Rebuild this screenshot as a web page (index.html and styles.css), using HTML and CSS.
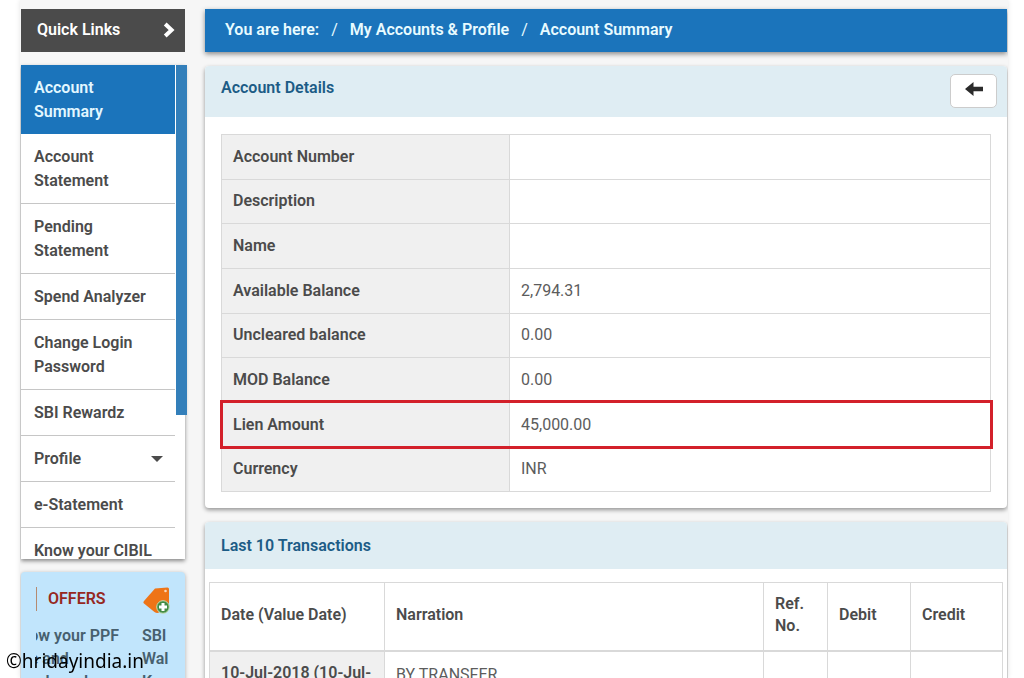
FILE: index.html
```html
<!DOCTYPE html>
<html lang="en">
<head>
<meta charset="utf-8">
<title>Account Summary</title>
<link rel="stylesheet" href="styles.css">
</head>
<body>
<div class="page">
  <aside class="sidebar">
    <h2 class="quick-links">Quick Links
      <svg class="chevron" viewBox="0 0 12 16" aria-hidden="true"><path d="M2.2 2 L8.6 8 L2.2 14" /></svg>
    </h2>
    <nav class="menu">
      <ul class="menu-list">
        <li><a class="active" href="#">Account Summary</a></li>
        <li><a href="#">Account Statement</a></li>
        <li><a href="#">Pending Statement</a></li>
        <li><a href="#">Spend Analyzer</a></li>
        <li><a href="#">Change Login Password</a></li>
        <li><a href="#">SBI Rewardz</a></li>
        <li><a class="expandable" href="#">Profile</a></li>
        <li><a href="#">e-Statement</a></li>
        <li><a href="#">Know your CIBIL</a></li>
      </ul>
      <div class="scroll-thumb"></div>
    </nav>
    <section class="offers">
      <div class="offers-head">
        <h2>OFFERS</h2>
        <svg class="tag" viewBox="0 0 27 27" aria-hidden="true">
          <path class="tag-body" d="M12 1.500 L24.500 .5 Q26 .5 26 2 L26 17 L16 25.500 Q14 26.500 11.500 25 L1 16.500 Q-.2 15.500 1 14 Z"/>
          <circle class="tag-hole" cx="22.500" cy="4" r="1.300"/>
          <circle class="tag-badge" cx="20" cy="20" r="6.300"/>
          <path class="tag-plus" d="M20 16 V24 M16 20 H24"/>
        </svg>
      </div>
      <div class="ticker">
        <p class="ticker-first">Know your PPF<br>rate and<br>withdrawal</p>
        <p>SBI<br>Wal<br>Kno</p>
      </div>
    </section>
  </aside>

  <main class="content">
    <nav class="breadcrumb">
      <span>You are here:</span><i>/</i><a href="#">My Accounts &amp; Profile</a><i>/</i><a href="#">Account Summary</a>
    </nav>

    <section class="panel">
      <header class="panel-head">
        <h1>Account Details</h1>
        <button class="back" type="button" aria-label="Back">
          <svg viewBox="0 0 18 14" aria-hidden="true"><path d="M0 7 L8.500 0 V4.700 H18 V9.300 H8.500 V14 Z"/></svg>
        </button>
      </header>
      <div class="panel-body">
        <table class="details">
          <tr><th scope="row">Account Number</th><td></td></tr>
          <tr><th scope="row">Description</th><td></td></tr>
          <tr><th scope="row">Name</th><td></td></tr>
          <tr><th scope="row">Available Balance</th><td>2,794.31</td></tr>
          <tr><th scope="row">Uncleared balance</th><td>0.00</td></tr>
          <tr><th scope="row">MOD Balance</th><td>0.00</td></tr>
          <tr class="highlight"><th scope="row">Lien Amount</th><td>45,000.00</td></tr>
          <tr><th scope="row">Currency</th><td>INR</td></tr>
        </table>
      </div>
    </section>

    <section class="panel">
      <header class="panel-head compact">
        <h1>Last 10 Transactions</h1>
      </header>
      <div class="panel-body wide">
        <table class="transactions">
          <colgroup><col class="c-date"><col><col class="c-ref"><col class="c-debit"><col class="c-credit"></colgroup>
          <thead>
            <tr><th scope="col">Date (Value Date)</th><th scope="col">Narration</th><th scope="col">Ref. No.</th><th scope="col">Debit</th><th scope="col">Credit</th></tr>
          </thead>
          <tbody>
            <tr><th scope="row">10-Jul-2018 (10-Jul-2018)</th><td>BY TRANSFER</td><td></td><td></td><td></td></tr>
          </tbody>
        </table>
      </div>
    </section>
  </main>
</div>
<div class="watermark">©hridayindia.in</div>
</body>
</html>
```
FILE: styles.css
```css
* { box-sizing: border-box; }

body {
  margin: 0;
  height: 100vh;
  overflow: hidden;
  background: #fff;
  color: #4b4b4b;
  font: 16px/24px Roboto, sans-serif;
}

h1, h2, p, ul { margin: 0; padding: 0; }
h1, h2, th { font-size: 16px; font-weight: 600; }
a { color: inherit; text-decoration: none; }

.page {
  display: flex;
  align-items: flex-start;
  gap: 20px;
  height: 100vh;
  overflow: hidden;
  margin: 0 16px 0 20px;
  padding: 9px 1px 0;
  background: #f6f6f6;
  box-shadow: 0 0 5px rgba(0, 0, 0, .1);
}

/* Sidebar */
.sidebar { flex: 0 0 164px; font-weight: 600; }

.quick-links {
  display: flex;
  align-items: center;
  justify-content: space-between;
  height: 43px;
  padding: 0 10px 2px 16px;
  background: #4b4b4b;
  color: #fff;
}
.chevron { width: 12px; height: 16px; fill: none; stroke: #fff; stroke-width: 4; }

.menu {
  position: relative;
  height: 494px;
  margin-top: 13px;
  background: #fff;
  box-shadow: 0 2px 4px rgba(0, 0, 0, .45);
}
.menu-list { height: 100%; margin-right: 10px; overflow: hidden; list-style: none; }
.menu-list a {
  display: block;
  padding: 11px 12px 10px 13px;
  border-bottom: 1px solid #c6c6c6;
}
.menu-list .active { padding-bottom: 9px; border-color: #1b74bb; background: #1b74bb; color: #e2f7ff; }
.menu-list .expandable { display: flex; align-items: center; justify-content: space-between; }
.expandable::after {
  content: "";
  border: 6px solid transparent;
  border-top-color: #4b4b4b;
  border-bottom: 0;
}
.scroll-thumb {
  position: absolute;
  top: 0;
  right: -2px;
  width: 11px;
  height: 350px;
  background: #337fba;
}

.offers {
  height: 160px;
  margin-top: 13px;
  padding: 15px 15px 0;
  border-radius: 4px;
  background: #c1e5fc;
  box-shadow: 0 1px 4px rgba(0, 0, 0, .3);
}
.offers-head { display: flex; align-items: flex-start; justify-content: space-between; height: 37px; }
.offers-head h2 { padding-left: 11px; border-left: 1px solid #b58a70; color: #96281f; }
.tag { width: 27px; height: 27px; }
.tag-body { fill: #ee7417; }
.tag-hole { fill: #fbd8b8; }
.tag-badge { fill: #438c45; stroke: #c5dfb4; stroke-width: 1; }
.tag-plus { stroke: #fff; stroke-width: 3; }
.ticker { display: flex; justify-content: space-between; line-height: 23px; color: #47606f; }
.ticker p { flex: 0 0 26px; white-space: nowrap; }
.ticker .ticker-first { display: flex; flex: 0 0 83px; justify-content: flex-end; overflow: hidden; }

/* Main column */
.content { flex: 1; min-width: 0; }

.breadcrumb {
  display: flex;
  align-items: center;
  gap: 12px;
  height: 43px;
  padding: 0 20px 2px;
  background: #1b74bb;
  box-shadow: 0 2px 5px rgba(0, 0, 0, .45);
  color: #e8fbff;
  font-weight: 600;
}
.breadcrumb i { font-style: normal; font-weight: 400; }

.panel {
  margin-top: 14px;
  border-radius: 4px;
  background: #fff;
  box-shadow: 0 2px 4px rgba(0, 0, 0, .4);
}
.panel-head {
  display: flex;
  align-items: flex-start;
  justify-content: space-between;
  padding: 8px 10px 9px 16px;
  border-radius: 4px 4px 0 0;
  background: #dfedf3;
  color: #1c5c86;
}
.panel-head h1 { padding-top: 2px; }
.panel-head.compact { padding: 10px 16px 11px; }
.back {
  display: flex;
  align-items: center;
  justify-content: center;
  width: 47px;
  height: 34px;
  padding: 0 0 4px;
  border: 1px solid #ccc;
  border-radius: 5px;
  background: #fff;
}
.back svg { width: 18px; height: 14px; fill: #2b2b2b; }

.panel-body { padding: 17px 16px 16px; }
.panel-body.wide { padding: 13px 4px; }

table { width: 100%; border-collapse: collapse; table-layout: fixed; line-height: 22px; }
th, td { padding: 10px 11px; border: 1px solid #d9d9d9; text-align: left; }
td { color: #5c5c5c; }

.details { height: 358px; }
.details th { width: 288px; background: #f0f0f0; }
.details th, .details td { padding: 10px 11px; }
.highlight { outline: 3px solid #d3202a; outline-offset: -1px; }

.c-date { width: 175px; }
.c-ref { width: 64px; }
.c-debit { width: 83px; }
.c-credit { width: 92px; }
.transactions thead th { height: 68px; padding: 8px 11px 10px; border-bottom: 2px solid #d9d9d9; }
.transactions tbody th { background: #f0f0f0; }
.transactions tbody td { padding-top: 12px; vertical-align: top; }

.watermark {
  position: fixed;
  bottom: 3px;
  left: 6px;
  color: #000;
  font: 19px/28px "Noto Sans", sans-serif;
}
```
